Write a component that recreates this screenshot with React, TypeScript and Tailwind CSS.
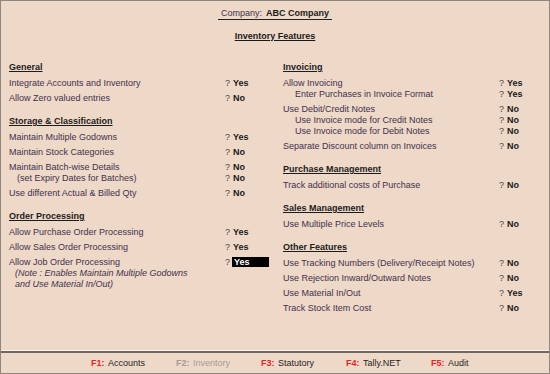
type Line = { label: string; value?: string; indent?: number; italic?: boolean; active?: boolean }
type Section = { title: string; items: Line[][] }

const leftSections: Section[] = [
  {
    title: 'General',
    items: [
      [{ label: 'Integrate Accounts and Inventory', value: 'Yes' }],
      [{ label: 'Allow Zero valued entries', value: 'No' }],
    ],
  },
  {
    title: 'Storage & Classification',
    items: [
      [{ label: 'Maintain Multiple Godowns', value: 'Yes' }],
      [{ label: 'Maintain Stock Categories', value: 'No' }],
      [
        { label: 'Maintain Batch-wise Details', value: 'No' },
        { label: '(set Expiry Dates for Batches)', value: 'No', indent: 8 },
      ],
      [{ label: 'Use different Actual & Billed Qty', value: 'No' }],
    ],
  },
  {
    title: 'Order Processing',
    items: [
      [{ label: 'Allow Purchase Order Processing', value: 'Yes' }],
      [{ label: 'Allow Sales Order Processing', value: 'Yes' }],
      [
        { label: 'Allow Job Order Processing', value: 'Yes', active: true },
        { label: '(Note : Enables Maintain Multiple Godowns', indent: 6, italic: true },
        { label: 'and Use Material In/Out)', indent: 6, italic: true },
      ],
    ],
  },
]

const rightSections: Section[] = [
  {
    title: 'Invoicing',
    items: [
      [
        { label: 'Allow Invoicing', value: 'Yes' },
        { label: 'Enter Purchases in Invoice Format', value: 'Yes', indent: 12 },
      ],
      [
        { label: 'Use Debit/Credit Notes', value: 'No' },
        { label: 'Use Invoice mode for Credit Notes', value: 'No', indent: 12 },
        { label: 'Use Invoice mode for Debit Notes', value: 'No', indent: 12 },
      ],
      [{ label: 'Separate Discount column on Invoices', value: 'No' }],
    ],
  },
  {
    title: 'Purchase Management',
    items: [[{ label: 'Track additional costs of Purchase', value: 'No' }]],
  },
  {
    title: 'Sales Management',
    items: [[{ label: 'Use Multiple Price Levels', value: 'No' }]],
  },
  {
    title: 'Other Features',
    items: [
      [{ label: 'Use Tracking Numbers (Delivery/Receipt Notes)', value: 'No' }],
      [{ label: 'Use Rejection Inward/Outward Notes', value: 'No' }],
      [{ label: 'Use Material In/Out', value: 'Yes' }],
      [{ label: 'Track Stock Item Cost', value: 'No' }],
    ],
  },
]

const footerKeys = [
  { key: 'F1:', name: 'Accounts', disabled: false },
  { key: 'F2:', name: 'Inventory', disabled: true },
  { key: 'F3:', name: 'Statutory', disabled: false },
  { key: 'F4:', name: 'Tally.NET', disabled: false },
  { key: 'F5:', name: 'Audit', disabled: false },
]

function Column({ sections }: { sections: Section[] }) {
  return (
    <div className="flex flex-col gap-[12px]">
      {sections.map((section) => (
        <div key={section.title}>
          <div className="h-[11px] mb-[5px] leading-[11px] font-bold text-[#1c1c1c]">
            <span className="underline decoration-1 underline-offset-[1px]">{section.title}</span>
          </div>
          <div className="flex flex-col gap-[4px]">
            {section.items.map((item, i) => (
              <div key={i}>
                {item.map((line) => (
                  <div key={line.label} className="flex h-[11px] leading-[11px]">
                    <div
                      className={`w-[216px] whitespace-nowrap text-[#43304d] ${line.italic ? 'italic' : ''}`}
                      style={{ paddingLeft: line.indent ?? 0 }}
                    >
                      {line.label}
                    </div>
                    {line.value && (
                      <>
                        <div className="w-[7px] text-[#4a4a4a]">?</div>
                        {line.active ? (
                          <div className="w-[37px] h-[10px] leading-[10px] bg-black pl-[2px] font-bold text-white">
                            {line.value}
                          </div>
                        ) : (
                          <div className="pl-[1px] font-bold text-[#1a1a1a]">{line.value}</div>
                        )}
                      </>
                    )}
                  </div>
                ))}
              </div>
            ))}
          </div>
        </div>
      ))}
    </div>
  )
}

export default function App() {
  return (
    <div className="w-[550px] h-[374px] flex flex-col bg-[#eed8c8] border border-[#8e8682] font-['Liberation_Sans',Arial,sans-serif] text-[9px]">
      <div className="flex-1 pt-[7px]">
        <div className="text-center leading-[11px]">
          <span className="inline-block border-b border-[#222] px-[3px] leading-[11px]">
            <span className="text-[#43304d]">Company:</span>
            <span className="ml-[4px] font-bold text-[#1a1a1a]">ABC Company</span>
          </span>
        </div>
        <div className="mt-[11px] text-center leading-[11px]">
          <span className="font-bold text-[#1a1a1a] underline decoration-1 underline-offset-[1px]">Inventory Features</span>
        </div>

        <div className="mt-[20px] grid grid-cols-[266px_266px] gap-x-[8px] pl-[8px]">
          <Column sections={leftSections} />
          <Column sections={rightSections} />
        </div>
      </div>

      {/* Button bar */}
      <div className="h-[23px] border-t border-[#fbf1ea]">
        <div className="h-full border-t-2 border-[#6f6763] pl-[90px] flex items-center">
          {footerKeys.map((f) => (
            <div key={f.key} className="w-[85px] flex whitespace-nowrap leading-[11px]">
              <span className={`w-[17px] font-bold ${f.disabled ? 'text-[#a59c96]' : 'text-[#ee2222]'}`}>{f.key}</span>
              <span className={f.disabled ? 'text-[#a59c96]' : 'text-[#1f1f1f]'}>{f.name}</span>
            </div>
          ))}
        </div>
      </div>
    </div>
  )
}
